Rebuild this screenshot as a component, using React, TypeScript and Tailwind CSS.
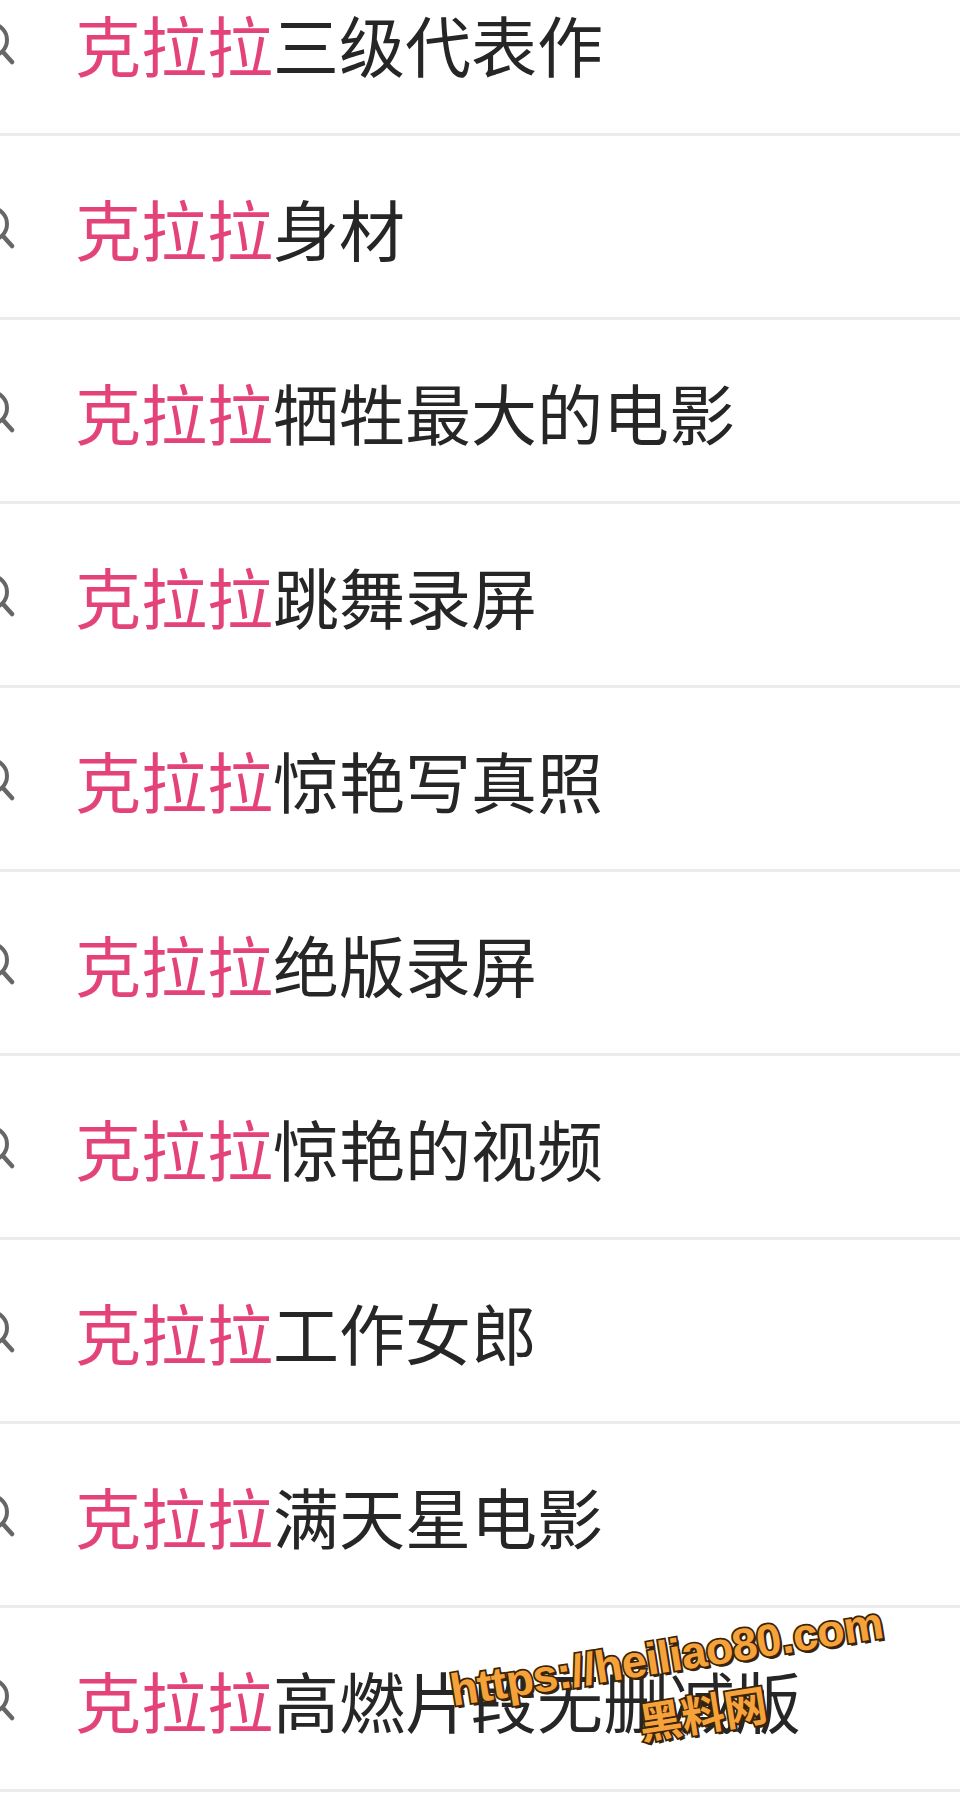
import React from "react";

const items = [
  "三级代表作",
  "身材",
  "牺牲最大的电影",
  "跳舞录屏",
  "惊艳写真照",
  "绝版录屏",
  "惊艳的视频",
  "工作女郎",
  "满天星电影",
  "高燃片段无删减版",
];

function SearchIcon() {
  return (
    <svg width="48" height="48" viewBox="0 0 48 48" className="shrink-0 -ml-[25px] mr-[52px] mt-[9px]" fill="none">
      <circle cx="16" cy="17" r="16" stroke="#666666" strokeWidth="4" />
      <path d="M28 29 L37 39" stroke="#666666" strokeWidth="4.5" strokeLinecap="round" />
    </svg>
  );
}

export default function App() {
  return (
    <div
      className="relative w-[960px] h-[1807px] overflow-hidden bg-white"
      style={{ fontFamily: '"Noto Sans CJK SC", "Noto Sans", sans-serif' }}
    >
      <div className="-mt-[48px] flex flex-col">
        {items.map((t, i) => (
          <div key={i} className="flex flex-col">
            <div className="h-[181px] flex items-center">
              <SearchIcon />
              <div className="text-[66px] leading-none whitespace-nowrap">
                <span className="text-[#e4437a]">克拉拉</span>
                <span className="text-[#262626]">{t}</span>
              </div>
            </div>
            <div className="h-[3px] bg-[#ebebeb]" />
          </div>
        ))}
      </div>

      <div
        className="absolute left-[448px] top-[1634px] -rotate-[9deg] text-[45px] font-bold leading-none whitespace-nowrap text-[#f6a23a] [-webkit-text-stroke:3.5px_#3a2408] [paint-order:stroke_fill] [text-shadow:2px_3px_0_#3a2408] tracking-[-0.5px]"
        style={{ fontFamily: '"Liberation Sans", Arial, sans-serif' }}
      >
        https://heiliao80.com
      </div>
      <div
        className="absolute left-[638px] top-[1690px] -rotate-[9deg] text-[43px] font-bold leading-none whitespace-nowrap text-[#f6a23a] [-webkit-text-stroke:3.5px_#3a2408] [paint-order:stroke_fill] [text-shadow:2px_3px_0_#3a2408]"
        style={{ fontFamily: '"Noto Sans CJK SC", sans-serif' }}
      >
        黑料网
      </div>
    </div>
  );
}
